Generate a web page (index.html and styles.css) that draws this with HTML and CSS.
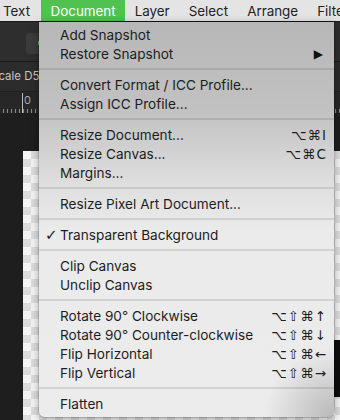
FILE: index.html
```html
<!DOCTYPE html>
<html lang="en">
<head>
    <meta charset="UTF-8">
    <meta name="viewport" content="width=device-width, initial-scale=1.0">
    <title>Document menu</title>
    <link rel="stylesheet" href="styles.css">
</head>
<body>
    <div class="menubar">
        <span class="menubar-item">Text</span>
        <span class="menubar-item active">Document</span>
        <span class="menubar-item">Layer</span>
        <span class="menubar-item">Select</span>
        <span class="menubar-item">Arrange</span>
        <span class="menubar-item">Filters</span>
    </div>

    <div class="workspace">
        <div class="toolbar">
            <div class="tool-button"><span class="tool-mark"></span></div>
        </div>
        <div class="context-bar">Scale D50</div>
        <div class="ruler">
            <span class="ruler-label">0</span>
        </div>
        <div class="stage">
            <div class="canvas"></div>
            <div class="stage-dark"></div>
        </div>
    </div>

    <div class="menu">
        <div class="menu-item"><span class="check"></span><span class="label">Add Snapshot</span></div>
        <div class="menu-item"><span class="check"></span><span class="label">Restore Snapshot</span><span class="submenu">&#9654;</span></div>
        <div class="separator"></div>
        <div class="menu-item"><span class="check"></span><span class="label">Convert Format / ICC Profile...</span></div>
        <div class="menu-item"><span class="check"></span><span class="label">Assign ICC Profile...</span></div>
        <div class="separator"></div>
        <div class="menu-item"><span class="check"></span><span class="label">Resize Document...</span><span class="shortcut">&#8997;&#8984;I</span></div>
        <div class="menu-item"><span class="check"></span><span class="label">Resize Canvas...</span><span class="shortcut">&#8997;&#8984;C</span></div>
        <div class="menu-item"><span class="check"></span><span class="label">Margins...</span></div>
        <div class="separator"></div>
        <div class="menu-item"><span class="check"></span><span class="label">Resize Pixel Art Document...</span></div>
        <div class="separator"></div>
        <div class="menu-item"><span class="check">&#10003;</span><span class="label">Transparent Background</span></div>
        <div class="separator"></div>
        <div class="menu-item"><span class="check"></span><span class="label">Clip Canvas</span></div>
        <div class="menu-item"><span class="check"></span><span class="label">Unclip Canvas</span></div>
        <div class="separator"></div>
        <div class="menu-item"><span class="check"></span><span class="label">Rotate 90° Clockwise</span><span class="shortcut">&#8997;&#8679;&#8984;&#8593;</span></div>
        <div class="menu-item"><span class="check"></span><span class="label">Rotate 90° Counter-clockwise</span><span class="shortcut">&#8997;&#8679;&#8984;&#8595;</span></div>
        <div class="menu-item"><span class="check"></span><span class="label">Flip Horizontal</span><span class="shortcut">&#8997;&#8679;&#8984;&#8592;</span></div>
        <div class="menu-item"><span class="check"></span><span class="label">Flip Vertical</span><span class="shortcut">&#8997;&#8679;&#8984;&#8594;</span></div>
        <div class="separator"></div>
        <div class="menu-item"><span class="check"></span><span class="label">Flatten</span></div>
    </div>
</body>
</html>
```

FILE: styles.css
```css
body {
    margin: 0;
    width: 340px;
    height: 420px;
    overflow: hidden;
    background: #1e1e1e;
    font-family: 'Inter', 'Liberation Sans', sans-serif;
    position: relative;
}

.menubar {
    height: 22px;
    background: #e4e4e4;
    display: flex;
    align-items: center;
    padding-left: 3px;
    white-space: nowrap;
    border-bottom: 1px solid #1a1a1a;
    box-sizing: border-box;
    overflow: hidden;
}
.menubar-item {
    font-size: 13.4px;
    color: #222;
    padding: 0 9.5px;
    line-height: 22px;
}
.menubar-item:first-child {
    padding-left: 0;
    padding-right: 11px;
}
.menubar-item.active {
    background: #4fc24f;
    color: white;
}

.toolbar {
    height: 40px;
    background: #2e2e2e;
    border-bottom: 1px solid #1c1c1c;
    padding: 11px 0 0 26px;
    box-sizing: border-box;
}
.tool-button {
    width: 30px;
    height: 21px;
    background: #3b3b3b;
    border-radius: 4px;
    position: relative;
}
.tool-mark {
    position: absolute;
    left: 12px;
    top: 8px;
    width: 2px;
    height: 4px;
    background: #4fc24f;
}
.context-bar {
    height: 29px;
    background: #2c2c2c;
    border-bottom: 1px solid #1f1f1f;
    color: #c4c4c4;
    font-size: 11.5px;
    line-height: 28px;
    margin-left: -9px;
}
.ruler {
    height: 21px;
    background-color: #272727;
    background-image: repeating-linear-gradient(to right, transparent 0, transparent 3px, #8a8a8a 3px, #8a8a8a 4px);
    background-size: 100% 4px;
    background-repeat: repeat-x;
    background-position: 0 bottom;
    position: relative;
}
.ruler-label {
    position: absolute;
    left: 22px;
    top: 1px;
    color: #aaa;
    font-size: 11px;
    border-left: 1px solid #bbb;
    padding-left: 1px;
    height: 20px;
}
.stage {
    position: relative;
    height: 307px;
    padding: 38px 0 0 23px;
    box-sizing: border-box;
}
.canvas {
    height: 100%;
    background-color: #f4f4f4;
    background-image:
        linear-gradient(45deg, #dcdcdc 25%, transparent 25%, transparent 75%, #dcdcdc 75%),
        linear-gradient(45deg, #dcdcdc 25%, transparent 25%, transparent 75%, #dcdcdc 75%);
    background-size: 16px 16px;
    background-position: 0 0, 8px 8px;
}
.stage-dark {
    position: absolute;
    left: 300px;
    top: 227px;
    width: 40px;
    height: 57px;
    background: #0d0d0d;
}

.menu {
    position: absolute;
    left: 39px;
    top: 22px;
    width: 295px;
    padding: 3px 0 4px;
    box-sizing: border-box;
    border-radius: 0 0 6px 6px;
    background:
        radial-gradient(circle at 100% 100%, rgba(0, 0, 0, 0.22), rgba(0, 0, 0, 0) 70px),
        linear-gradient(to bottom, #b7b7b7 0, #c2c2c2 90px, #dedede 160px, #ebebeb 210px, #ececec 100%);
    box-shadow: 0 2px 8px rgba(0, 0, 0, 0.35), 0 0 0 0.5px rgba(0, 0, 0, 0.25);
    color: #1d1d1d;
}
.menu-item {
    display: flex;
    align-items: center;
    height: 19px;
    padding: 0 7px 0 6px;
    font-size: 13.6px;
}
.check {
    width: 15px;
    font-size: 15px;
    font-family: 'DejaVu Sans', sans-serif;
}
.label {
    flex: 1;
    white-space: nowrap;
}
.shortcut {
    font-family: 'DejaVu Sans', sans-serif;
    font-size: 13.5px;
    letter-spacing: 1px;
}
.submenu {
    font-size: 12px;
    margin-right: 4px;
    color: #111;
    font-family: 'DejaVu Sans', sans-serif;
}
.separator {
    height: 2px;
    margin: 5px 0;
    background: rgba(0, 0, 0, 0.1);
}
```
